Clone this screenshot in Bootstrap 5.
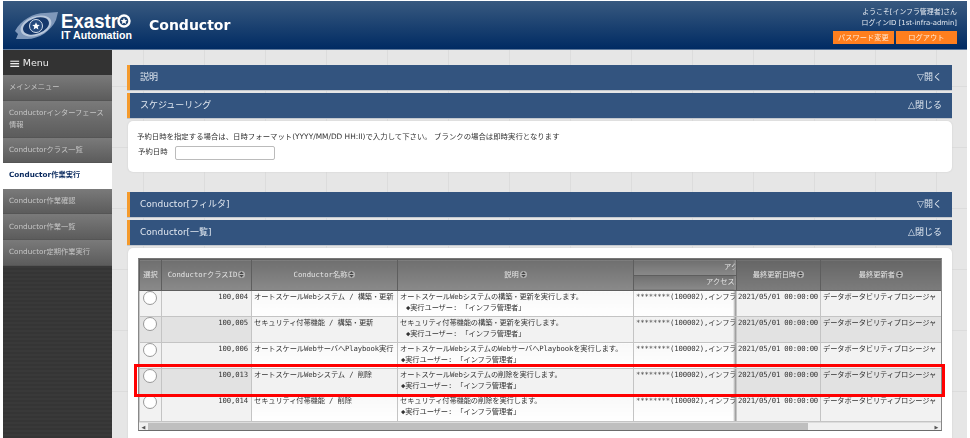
<!DOCTYPE html>
<html lang="ja">
<head>
<meta charset="utf-8">
<title>Conductor</title>
<link rel="stylesheet" href="https://cdn.jsdelivr.net/npm/bootstrap@5.3.0/dist/css/bootstrap.min.css">
<style>
html,body{margin:0;height:438px;overflow:hidden;background:#fff}
body{font-family:"DejaVu Sans","Noto Sans CJK JP",sans-serif;font-size:7.25px;color:#333;line-height:1.2}
.ex-shell{padding:1px 3px 0;height:438px;position:relative;filter:blur(.4px)}
.ex-head{height:49px;background:linear-gradient(#38597f,#002b63);border-bottom:1px solid #5f7a9c}
.ex-logo{width:125px;height:40px;margin:4px 0 0 11px;flex:none}
.ex-title{font-size:14px;font-weight:700;color:#fff;margin-left:10px;margin-top:1px}
.ex-user{color:#e6ebf2;font-size:6.9px;text-align:right;line-height:11px;padding:6px 10px 0 0;margin-left:auto}
.ex-btn{display:inline-block;width:61px;height:13px;line-height:13px;background:#ff7f1e;color:#ffe9d6;text-align:center;font-size:7.25px;margin-left:2px;margin-top:2px}
.ex-body{height:388px}
.ex-side{width:109px;flex:none;background:repeating-linear-gradient(#393939 0 2px,#353535 2px 4px)}
.ex-menuhead{height:25px;background:#333;color:#eee;font-size:9.5px;padding-left:6px;display:flex;align-items:center;gap:2px}
.ex-burger{font-size:14px;line-height:1}
.ex-nav a{display:flex;align-items:center;min-height:25.6px;padding:0 6px;color:#c4c4c4;text-decoration:none;font-size:7.25px;line-height:12px;background:linear-gradient(#7a7a7a,#5c5c5c);border-bottom:1px solid #555}
.ex-nav a.ex-tall{min-height:37px}
.ex-nav a.ex-on{background:#fff;color:#0a2a5e;font-weight:700;border-bottom-color:#fff}
.ex-main{flex:1;min-width:0;padding:15px 15px 0;background-color:#e6e6e6;background-image:linear-gradient(#dcdcdc 1px,transparent 1px),linear-gradient(90deg,#dcdcdc 1px,transparent 1px);background-size:61px 61px;background-position:31px 36px}
.ex-bar{height:25px;background:#33547f;border-left:3px solid #f49a2c;color:#dfe6ef;font-size:9px;display:flex;align-items:center;justify-content:space-between;padding:0 10px;margin-bottom:3px;box-shadow:0 1px 0 #c4c8ce}
.ex-panel{background:#fff;border-radius:5px;box-shadow:0 0 2px #ccc;margin-left:1px}
.ex-p1{height:51px;padding:12px 9px 0;margin-bottom:20px;font-size:7.4px}
.ex-line{margin-bottom:4px}
.ex-label{padding-left:1px;margin-right:7px}
.ex-input{width:100px;height:14px;border:1px solid #bbb;border-radius:2px;background:#fff;display:block}
.ex-p2{height:200px;padding:10px 10px 0}
.ex-wrap{width:804px;height:173px;border:1px solid #888;border-top-color:#777;border-bottom-color:#6b6b6b;overflow:hidden;background:#f0f0f0;box-sizing:border-box}
.ex-tbl{table-layout:fixed;width:802px;border-collapse:collapse;margin:0;font-family:"DejaVu Sans Mono","Noto Sans CJK JP",monospace;font-size:7.25px}
.ex-tbl th{background:linear-gradient(#6f6f6f,#8a8a8a);color:#e4e4e4;font-weight:400;text-align:center;vertical-align:middle;border:1px solid #5e5e5e;padding:0;white-space:nowrap;overflow:hidden;height:15.5px;box-shadow:none}
.ex-tbl th.ex-hfix{background:linear-gradient(#666,#7c7c7c)}
.ex-tbl td{border:1px solid #c4c4c4;padding:0 2px;height:26px;vertical-align:top;white-space:nowrap;overflow:hidden;line-height:11px;letter-spacing:-.12px;background:linear-gradient(#f8f8f8,#fff);color:#333;box-shadow:none}
.ex-tbl tr.ex-alt td{background:#f2f2f2}
.ex-tbl td.ex-fix{background:#f2f2f2}
.ex-tbl tr.ex-alt td.ex-fix{background:#e2e2e2}
.ex-tbl tr.ex-last td{height:27px}
.ex-tbl td.ex-num{text-align:right;padding-right:3px}
.ex-tbl td.ex-date{letter-spacing:-.15px;padding:0 1px}
.ex-tbl td.ex-radio{padding:0 0 0 3px;text-align:left}
.ex-tbl .ex-clip{position:relative}
.ex-tbl .ex-clip::after{content:"";position:absolute;top:0;bottom:0;right:0;width:3px;background:linear-gradient(90deg,transparent,#8f8f8f)}
.ex-tbl .form-check-input{width:14px;height:14px;margin:0;border:1px solid #999;float:none;vertical-align:top}
.ex-tbl th.ex-cut1{text-align:left;padding-left:90px}
.ex-tbl th.ex-cut2{text-align:left;padding-left:72px}
.ex-sort{width:7px;height:7px;vertical-align:-1px;margin-left:1px}
.ex-in{display:inline-block;padding-left:6px}
.ex-in2{display:inline-block;padding-left:1px}
.ex-scroll{height:9px;background:#f0f0f0;border-top:1px solid #ddd;box-sizing:border-box}
.ex-thumb{width:660px;height:8px;background:#bfbfbf}
.ex-arrow{width:9px;height:8px;color:#555;font-size:5px;line-height:8px;text-align:center}
.ex-red{position:absolute;left:134px;top:364px;width:811px;height:33px;border:3px solid #f00;pointer-events:none}
</style>
</head>
<body>
<svg width="0" height="0" class="position-absolute">
<symbol id="ex-s" viewBox="0 0 12 12"><circle cx="6" cy="6" r="6" fill="#b5b5b5"/><path d="M6 1 10 5.2H2zM6 11 2 6.8h8z" fill="#4a4a4a"/></symbol>
</svg>
<div class="ex-shell">
<header class="ex-head d-flex">
<svg class="ex-logo" viewBox="0 0 125 40" role="img" aria-label="Exastro IT Automation">
<path d="M1 26C7 15 19 8 31 8L44 7 42 15C37 26 25 34 13 34L2 34 4 29z" fill="#7f98ba"/>
<ellipse cx="22" cy="21" rx="16" ry="9.5" transform="rotate(-20 22 21)" fill="#b9c8dc"/>
<ellipse cx="22" cy="21" rx="13.5" ry="7.8" transform="rotate(-20 22 21)" fill="#16386b"/>
<circle cx="22" cy="21" r="6.5" fill="#25497d" stroke="#d5dfeb" stroke-width="1"/>
<path d="m22 17.2 1.1 2.5 2.7.2-2.1 1.8.7 2.7-2.4-1.5-2.4 1.5.7-2.7-2.1-1.8 2.7-.2z" fill="#fff"/>
<text x="47" y="23" font-family="Liberation Sans,sans-serif" font-weight="700" font-size="21" fill="#fff" textLength="57" lengthAdjust="spacingAndGlyphs">Exastr</text>
<circle cx="110" cy="16" r="5.5" fill="none" stroke="#fff" stroke-width="2.4"/>
<path d="m110 12.8 1 2.2 2.4.2-1.8 1.5.6 2.3-2.2-1.3-2.2 1.3.6-2.3-1.8-1.5 2.4-.2z" fill="#fff"/>
<text x="47" y="34" font-family="Liberation Sans,sans-serif" font-weight="700" font-size="10" fill="#fff" textLength="71" lengthAdjust="spacingAndGlyphs">IT Automation</text>
</svg>
<div class="ex-title align-self-center">Conductor</div>
<div class="ex-user">
<div>ようこそ[インフラ管理者]さん</div>
<div>ログインID [1st-infra-admin]</div>
<div class="d-flex justify-content-end"><span class="ex-btn">パスワード変更</span><span class="ex-btn">ログアウト</span></div>
</div>
</header>
<div class="ex-body d-flex">
<aside class="ex-side">
<div class="ex-menuhead"><span class="ex-burger">≡</span><span>Menu</span></div>
<nav class="ex-nav">
<a href="#">メインメニュー</a>
<a href="#" class="ex-tall">Conductorインターフェース<br>情報</a>
<a href="#">Conductorクラス一覧</a>
<a href="#" class="ex-on">Conductor作業実行</a>
<a href="#">Conductor作業確認</a>
<a href="#">Conductor作業一覧</a>
<a href="#">Conductor定期作業実行</a>
</nav>
</aside>
<main class="ex-main">
<div class="ex-bar"><span>説明</span><span>▽開く</span></div>
<div class="ex-bar"><span>スケジューリング</span><span>△閉じる</span></div>
<section class="ex-panel ex-p1">
<div class="ex-line">予約日時を指定する場合は、日時フォーマット(YYYY/MM/DD HH:II)で入力して下さい。 ブランクの場合は即時実行となります</div>
<div class="d-flex align-items-center"><span class="ex-label">予約日時</span><span class="ex-input"></span></div>
</section>
<div class="ex-bar"><span>Conductor[フィルタ]</span><span>▽開く</span></div>
<div class="ex-bar"><span>Conductor[一覧]</span><span>△閉じる</span></div>
<section class="ex-panel ex-p2">
<div class="ex-wrap">
<table class="ex-tbl">
<colgroup><col style="width:22px"><col style="width:90px"><col style="width:146px"><col style="width:236px"><col style="width:103px"><col style="width:84px"><col style="width:121px"></colgroup>
<thead>
<tr><th rowspan="2">選択</th><th rowspan="2">ConductorクラスID<svg class="ex-sort"><use href="#ex-s"/></svg></th><th rowspan="2">Conductor名称<svg class="ex-sort"><use href="#ex-s"/></svg></th><th rowspan="2">説明<svg class="ex-sort"><use href="#ex-s"/></svg></th><th class="ex-cut1 ex-clip">アクセス権</th><th rowspan="2" class="ex-hfix">最終更新日時<svg class="ex-sort"><use href="#ex-s"/></svg></th><th rowspan="2" class="ex-hfix">最終更新者<svg class="ex-sort"><use href="#ex-s"/></svg></th></tr>
<tr><th class="ex-cut2 ex-clip">アクセス許可ロール</th></tr>
</thead>
<tbody>
<tr><td class="ex-fix ex-radio"><input class="form-check-input" type="radio" name="ex" aria-label="100,004"></td><td class="ex-fix ex-num">100,004</td><td>オートスケールWebシステム / 構築・更新</td><td>オートスケールWebシステムの構築・更新を実行します。<br><span class="ex-in">◆実行ユーザー: 「インフラ管理者」</span></td><td class="ex-clip">********(100002),インフラ管理者</td><td class="ex-fix ex-date">2021/05/01 00:00:00</td><td class="ex-fix">データポータビリティプロシージャ</td></tr>
<tr class="ex-alt"><td class="ex-fix ex-radio"><input class="form-check-input" type="radio" name="ex" aria-label="100,005"></td><td class="ex-fix ex-num">100,005</td><td>セキュリティ付帯機能 / 構築・更新</td><td>セキュリティ付帯機能の構築・更新を実行します。<br><span class="ex-in">◆実行ユーザー: 「インフラ管理者」</span></td><td class="ex-clip">********(100002),インフラ管理者</td><td class="ex-fix ex-date">2021/05/01 00:00:00</td><td class="ex-fix">データポータビリティプロシージャ</td></tr>
<tr><td class="ex-fix ex-radio"><input class="form-check-input" type="radio" name="ex" aria-label="100,006"></td><td class="ex-fix ex-num">100,006</td><td>オートスケールWebサーバへPlaybook実行</td><td>オートスケールWebシステムのWebサーバへPlaybookを実行します。<br><span class="ex-in2">◆実行ユーザー: 「インフラ管理者」</span></td><td class="ex-clip">********(100002),インフラ管理者</td><td class="ex-fix ex-date">2021/05/01 00:00:00</td><td class="ex-fix">データポータビリティプロシージャ</td></tr>
<tr class="ex-alt"><td class="ex-fix ex-radio"><input class="form-check-input" type="radio" name="ex" aria-label="100,013"></td><td class="ex-fix ex-num">100,013</td><td>オートスケールWebシステム / 削除</td><td>オートスケールWebシステムの削除を実行します。<br><span class="ex-in2">◆実行ユーザー: 「インフラ管理者」</span></td><td class="ex-clip">********(100002),インフラ管理者</td><td class="ex-fix ex-date">2021/05/01 00:00:00</td><td class="ex-fix">データポータビリティプロシージャ</td></tr>
<tr class="ex-last"><td class="ex-fix ex-radio"><input class="form-check-input" type="radio" name="ex" aria-label="100,014"></td><td class="ex-fix ex-num">100,014</td><td>セキュリティ付帯機能 / 削除</td><td>セキュリティ付帯機能の削除を実行します。<br><span class="ex-in2">◆実行ユーザー: 「インフラ管理者」</span></td><td class="ex-clip">********(100002),インフラ管理者</td><td class="ex-fix ex-date">2021/05/01 00:00:00</td><td class="ex-fix">データポータビリティプロシージャ</td></tr>
</tbody>
</table>
<div class="ex-scroll d-flex"><div class="ex-arrow">◀</div><div class="ex-thumb"></div><div class="ex-arrow ms-auto">▶</div></div>
</div>
</section>
</main>
</div>
<div class="ex-red"></div>
</div>
<script src="https://cdn.jsdelivr.net/npm/bootstrap@5.3.0/dist/js/bootstrap.bundle.min.js"></script>
</body>
</html>
